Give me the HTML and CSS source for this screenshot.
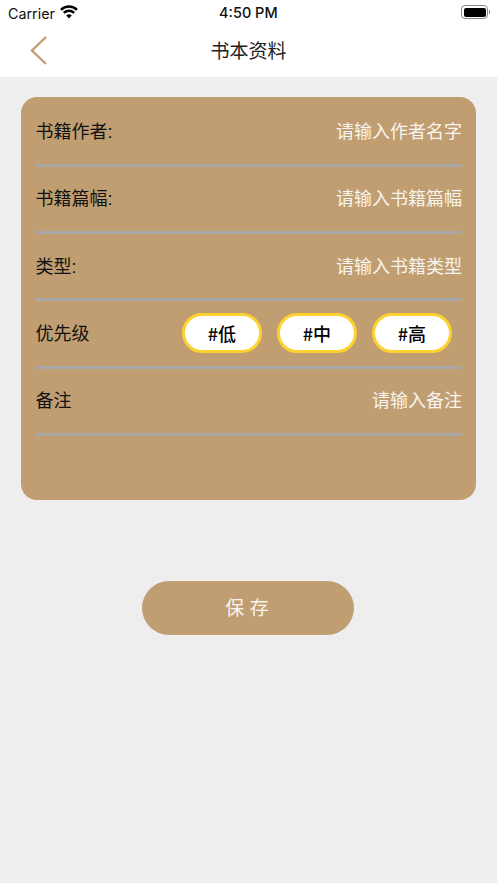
FILE: index.html
```html
<!DOCTYPE html>
<html lang="zh-CN">
  <head>
    <meta charset="UTF-8" />
    <meta name="viewport" content="width=device-width, initial-scale=1.0" />
    <title>书本资料</title>
    <link rel="stylesheet" href="styles.css">
  </head>
  <body>
    <header class="top">
      <div class="status-bar">
        <div class="status-left">
          <span class="carrier">Carrier</span>
          <svg class="wifi" width="18" height="14" viewBox="0 0 18 14">
            <path d="M1 4.8 A11.5 11.5 0 0 1 17 4.8" fill="none" stroke="#000" stroke-width="2.5" />
            <path d="M3.8 7.8 A7.5 7.5 0 0 1 14.2 7.8" fill="none" stroke="#000" stroke-width="2.5" />
            <path d="M6.2 10.6 A4.2 4.2 0 0 1 11.8 10.6 L9 13.6 Z" fill="#000" />
          </svg>
        </div>
        <span class="time">4:50 PM</span>
        <div class="battery">
          <div class="battery-body"><div class="battery-fill"></div></div>
          <div class="battery-cap"></div>
        </div>
      </div>
      <nav class="nav-bar">
        <svg class="back" width="18" height="30" viewBox="0 0 18 30">
          <path d="M16 2 L2 15.5 L16 29" fill="none" stroke="#c09e72" stroke-width="2.4" />
        </svg>
        <h1 class="nav-title">书本资料</h1>
      </nav>
    </header>

    <main class="content">
      <section class="card">
        <div class="row">
          <span class="label">书籍作者:</span>
          <span class="placeholder">请输入作者名字</span>
        </div>
        <div class="row">
          <span class="label">书籍篇幅:</span>
          <span class="placeholder">请输入书籍篇幅</span>
        </div>
        <div class="row">
          <span class="label">类型:</span>
          <span class="placeholder">请输入书籍类型</span>
        </div>
        <div class="row">
          <span class="label">优先级</span>
          <div class="tags">
            <button class="tag">#低</button>
            <button class="tag">#中</button>
            <button class="tag">#高</button>
          </div>
        </div>
        <div class="row">
          <span class="label">备注</span>
          <span class="placeholder">请输入备注</span>
        </div>
      </section>
      <button class="save">保 存</button>
    </main>
  </body>
</html>
```

FILE: styles.css
```css
* {
  box-sizing: border-box;
}

html,
body {
  height: 100%;
}

body {
  margin: 0;
  font-family: "Liberation Sans", "Noto Sans CJK SC", sans-serif;
  background-color: #eeeeee;
  overflow: hidden;
}

.top {
  height: 77px;
  background: white;
}

.status-bar {
  height: 26px;
  padding: 0 7px 0 8px;
  display: flex;
  align-items: center;
  justify-content: space-between;
  position: relative;
}

.status-left {
  display: flex;
  align-items: center;
  gap: 5px;
}

.carrier {
  font-family: Inter, sans-serif;
  font-size: 14.3px;
  color: #111;
}

.wifi {
  margin-top: -3px;
}

.time {
  position: absolute;
  left: 219px;
  top: 4px;
  font-family: Inter, sans-serif;
  font-size: 14.5px;
  font-weight: 500;
  color: #111;
}

.battery {
  display: flex;
  align-items: center;
  margin-top: -2px;
}

.battery-body {
  width: 27px;
  height: 14px;
  padding: 1.5px;
  border: 1px solid #8a8a8a;
  border-radius: 4px;
}

.battery-fill {
  height: 100%;
  background: #000;
  border-radius: 2px;
}

.battery-cap {
  width: 1px;
  height: 4px;
  margin-left: 1px;
  background: #8a8a8a;
}

.nav-bar {
  height: 51px;
  padding-bottom: 4px;
  display: flex;
  align-items: center;
  justify-content: center;
  position: relative;
}

.back {
  position: absolute;
  left: 30px;
  top: 9px;
}

.nav-title {
  margin: 0;
  font-size: 19px;
  font-weight: 400;
  color: #222;
}

.content {
  padding: 20px 21px 0;
  display: flex;
  flex-direction: column;
  align-items: center;
}

.card {
  width: 455px;
  height: 403px;
  padding: 2.5px 14px 0 15px;
  background: #c09e72;
  border-radius: 16px;
}

.row {
  height: 67.3px;
  padding-bottom: 3px;
  border-bottom: 3px solid #a8a8a8;
  display: flex;
  align-items: center;
  justify-content: space-between;
}

.label {
  margin-left: -0.5px;
  font-size: 18px;
  color: #111;
}

.placeholder {
  font-size: 18px;
  color: #f8f4ee;
}

.tags {
  display: flex;
  gap: 15px;
  margin-top: 2px;
  margin-right: 10px;
}

.tag {
  width: 80px;
  height: 40px;
  padding: 0;
  font-family: "Noto Sans CJK SC", sans-serif;
  font-size: 18px;
  font-weight: 500;
  color: #000;
  background: white;
  border: 3px solid #fdd22f;
  border-radius: 20px;
}

.save {
  width: 212px;
  height: 54px;
  margin-top: 81px;
  margin-right: 1px;
  padding: 0 2px 4px 0;
  font-family: inherit;
  font-size: 19px;
  color: #f8f4ee;
  background: #c09e72;
  border: none;
  border-radius: 27px;
}
```
